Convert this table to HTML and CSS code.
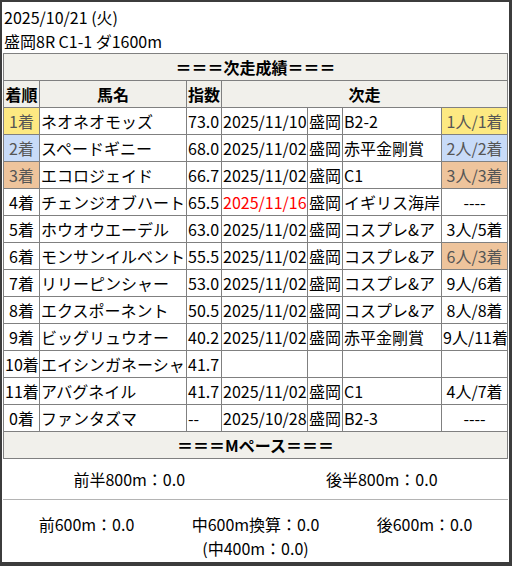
FILE: index.html
```html
<!DOCTYPE html>
<html lang="ja">
<head>
<meta charset="utf-8">
<link rel="stylesheet" href="styles.css">
</head>
<body>
<div class="card">
  <div class="head">
    <div>2025/10/21 (火)</div>
    <div>盛岡8R C1-1 ダ1600m</div>
  </div>
  <table class="res">
    <colgroup>
      <col class="c1"><col class="c2"><col class="c3"><col class="c4"><col class="c5"><col class="c6"><col class="c7">
    </colgroup>
    <tr><th colspan="7" class="sec">＝＝＝次走成績＝＝＝</th></tr>
    <tr class="hdr"><th>着順</th><th>馬名</th><th>指数</th><th colspan="4">次走</th></tr>
    <tr><td class="pos gold">1着</td><td>ネオネオモッズ</td><td>73.0</td><td>2025/11/10</td><td>盛岡</td><td>B2-2</td><td class="fin gold">1人/1着</td></tr>
    <tr><td class="pos silver">2着</td><td>スペードギニー</td><td>68.0</td><td>2025/11/02</td><td>盛岡</td><td>赤平金剛賞</td><td class="fin silver">2人/2着</td></tr>
    <tr><td class="pos bronze">3着</td><td>エコロジェイド</td><td>66.7</td><td>2025/11/02</td><td>盛岡</td><td>C1</td><td class="fin bronze">3人/3着</td></tr>
    <tr><td class="pos">4着</td><td>チェンジオブハート</td><td>65.5</td><td class="red">2025/11/16</td><td>盛岡</td><td>イギリス海岸</td><td class="fin">----</td></tr>
    <tr><td class="pos">5着</td><td>ホウオウエーデル</td><td>63.0</td><td>2025/11/02</td><td>盛岡</td><td>コスプレ&amp;ア</td><td class="fin">3人/5着</td></tr>
    <tr><td class="pos">6着</td><td>モンサンイルベント</td><td>55.5</td><td>2025/11/02</td><td>盛岡</td><td>コスプレ&amp;ア</td><td class="fin bronze">6人/3着</td></tr>
    <tr><td class="pos">7着</td><td>リリーピンシャー</td><td>53.0</td><td>2025/11/02</td><td>盛岡</td><td>コスプレ&amp;ア</td><td class="fin">9人/6着</td></tr>
    <tr><td class="pos">8着</td><td>エクスポーネント</td><td>50.5</td><td>2025/11/02</td><td>盛岡</td><td>コスプレ&amp;ア</td><td class="fin">8人/8着</td></tr>
    <tr><td class="pos">9着</td><td>ビッグリュウオー</td><td>40.2</td><td>2025/11/02</td><td>盛岡</td><td>赤平金剛賞</td><td class="fin">9人/11着</td></tr>
    <tr><td class="pos">10着</td><td>エイシンガネーシャ</td><td>41.7</td><td></td><td></td><td></td><td class="fin"></td></tr>
    <tr><td class="pos">11着</td><td>アバグネイル</td><td>41.7</td><td>2025/11/02</td><td>盛岡</td><td>C1</td><td class="fin">4人/7着</td></tr>
    <tr><td class="pos">0着</td><td>ファンタズマ</td><td>--</td><td>2025/10/28</td><td>盛岡</td><td>B2-3</td><td class="fin">----</td></tr>
    <tr><th colspan="7" class="sec">＝＝＝Mペース＝＝＝</th></tr>
  </table>
  <div class="pace2">
    <div>前半800m：0.0</div>
    <div>後半800m：0.0</div>
  </div>
  <div class="pace3">
    <div>前600m：0.0</div>
    <div>中600m換算：0.0<br>(中400m：0.0)</div>
    <div>後600m：0.0</div>
  </div>
</div>
</body>
</html>
```

FILE: styles.css
```css
html, body {
  margin: 0;
  padding: 0;
}
body {
  background: #3c3c3c;
  width: 512px;
  height: 566px;
  overflow: hidden;
  font-family: "Noto Sans CJK JP", "Noto Sans", sans-serif;
  font-size: 16px;
  color: #000;
}
.card {
  margin: 2px 0 0 2px;
  width: 507px;
  height: 560px;
  background: #fff;
  display: flex;
  flex-direction: column;
}
.head {
  padding: 3px 2px 0 2px;
  line-height: 24px;
}
.res {
  border-collapse: collapse;
  table-layout: fixed;
  width: 505px;
  margin-left: 1px;
}
.c1 { width: 36px; }
.c2 { width: 147px; }
.c3 { width: 35px; }
.c4 { width: 86px; }
.c5 { width: 35px; }
.c6 { width: 99px; }
.c7 { width: 66px; }
.res td, .res th {
  border: 1px solid #808080;
  height: 26px;
  padding: 0 1px;
  line-height: 26px;
  white-space: nowrap;
  overflow: hidden;
  text-align: left;
}
.res th {
  background: #f1f0eb;
  font-weight: bold;
  text-align: center;
}
.res td.pos, .res td.fin {
  text-align: center;
}
.res td.red { color: #ff0000; }
.gold { background: #fde982; }
.silver { background: #c8dbf8; }
.bronze { background: #eec49c; }
.res td.gold, .res td.silver, .res td.bronze { color: #555; }
.pace2 {
  display: grid;
  grid-template-columns: 1fr 1fr;
  height: 40px;
  align-items: center;
  text-align: center;
  border-bottom: 1px solid #b4b4b4;
  margin: 0 1px;
}
.pace3 {
  display: grid;
  grid-template-columns: 1fr 1fr 1fr;
  text-align: center;
  line-height: 24px;
  padding-top: 12px;
}
```
